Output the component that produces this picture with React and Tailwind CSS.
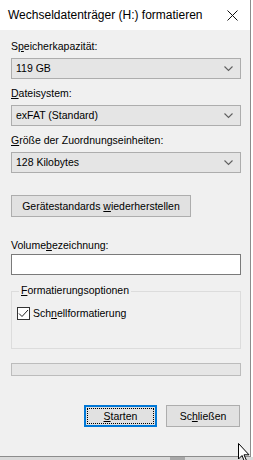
import React from "react";

const font = { fontFamily: '"Liberation Sans", Arial, sans-serif' };

function Chevron() {
  return (
    <svg width="9" height="6" viewBox="0 0 9 6" className="absolute right-[7px] top-[7px]">
      <path d="M0.5 0.5 L4.5 4.5 L8.5 0.5" fill="none" stroke="#606060" strokeWidth="1.1" />
    </svg>
  );
}

function Select({ value }) {
  return (
    <div className="relative h-[21px] w-[230px] border border-[#adadad] bg-[#e5e5e5] pl-[4px] text-[10.5px] leading-[19px] text-black">
      {value}
      <Chevron />
    </div>
  );
}

function Label({ children, className = "" }) {
  return <div className={"text-[10.5px] leading-[13px] text-black " + className}>{children}</div>;
}

export default function App() {
  return (
    <div className="relative h-[460px] w-[253px] overflow-hidden bg-[#d9d9d9]" style={font}>
      <div className="flex h-[457px] w-[251px] flex-col border-r border-b border-[#8c8c8c] bg-[#f0f0f0]">
        {/* title bar */}
        <div className="flex h-[30px] shrink-0 items-center justify-between bg-white pl-[8px] pr-[12px]">
          <span className="text-[12px] text-black">Wechseldatenträger (H:) formatieren</span>
          <svg width="11" height="11" viewBox="0 0 11 11">
            <path d="M0.5 0.5 L10.5 10.5 M10.5 0.5 L0.5 10.5" stroke="#111" strokeWidth="1" />
          </svg>
        </div>
        {/* body */}
        <div className="flex flex-col pl-[11px] pt-[10px]">
          <Label>S<u>p</u>eicherkapazität:</Label>
          <div className="mt-[5px]"><Select value="119 GB" /></div>
          <Label className="mt-[8px]"><u>D</u>ateisystem:</Label>
          <div className="mt-[5px]"><Select value="exFAT (Standard)" /></div>
          <Label className="mt-[8px]"><u>G</u>röße der Zuordnungseinheiten:</Label>
          <div className="mt-[5px]"><Select value="128 Kilobytes" /></div>
          <div className="mt-[22px] h-[22px] w-[180px] border border-[#adadad] bg-[#e1e1e1] text-center text-[10.5px] leading-[20px] text-black">
            Gerätestandards <u>w</u>iederherstellen
          </div>
          <Label className="mt-[22px]">Volume<u>b</u>ezeichnung:</Label>
          <div className="mt-[2px] h-[21px] w-[230px] border border-[#7a7a7a] bg-white" />
          <div className="relative mt-[16px] h-[58px] w-[230px] border border-[#dcdcdc]">
            <div className="absolute left-[7px] top-[-8px] bg-[#f0f0f0] px-[2px] text-[10.5px] leading-[13px] text-black">
              <u>F</u>ormatierungsoptionen
            </div>
            <div className="absolute left-[5px] top-[15px] flex items-center gap-[3px]">
              <div className="flex h-[13px] w-[13px] items-center justify-center border border-[#333] bg-white">
                <svg width="11" height="9" viewBox="0 0 11 9">
                  <path d="M1 4.5 L4 7.5 L10 1" fill="none" stroke="#222" strokeWidth="1" />
                </svg>
              </div>
              <span className="text-[10.5px] leading-[13px] text-black">Sch<u>n</u>ellformatierung</span>
            </div>
          </div>
          <div className="mt-[14px] h-[13px] w-[230px] border border-[#bcbcbc] bg-[#e6e6e6]" />
          <div className="mt-[29px] flex w-[229px] justify-end gap-[9px]">
            <div className="relative h-[22px] w-[73px] border-2 border-[#0078d7] bg-[#e1e1e1] text-center text-[10.5px] leading-[18px] text-black">
              <div className="absolute inset-[1px] border border-dotted border-black" />
              <span className="relative"><u>S</u>tarten</span>
            </div>
            <div className="h-[22px] w-[74px] border border-[#adadad] bg-[#e1e1e1] text-center text-[10.5px] leading-[20px] text-black">
              Sc<u>h</u>ließen
            </div>
          </div>
        </div>
      </div>
      {/* strip below window */}
      <div className="absolute left-[170px] top-[457px] h-[3px] w-[15px] bg-[#a8a8a8]" />
      {/* right white strip */}
      <div className="absolute right-0 top-0 h-[457px] w-[2px] bg-white" />
      {/* cursor */}
      <svg className="absolute left-[238px] top-[443px]" width="13" height="20" viewBox="0 0 13 20">
        <path d="M0.5 0.5 L0.5 16 L4 12.5 L6.5 18.5 L8.5 17.5 L6 11.8 L11 11.8 Z" fill="white" stroke="black" strokeWidth="1" />
      </svg>
    </div>
  );
}
